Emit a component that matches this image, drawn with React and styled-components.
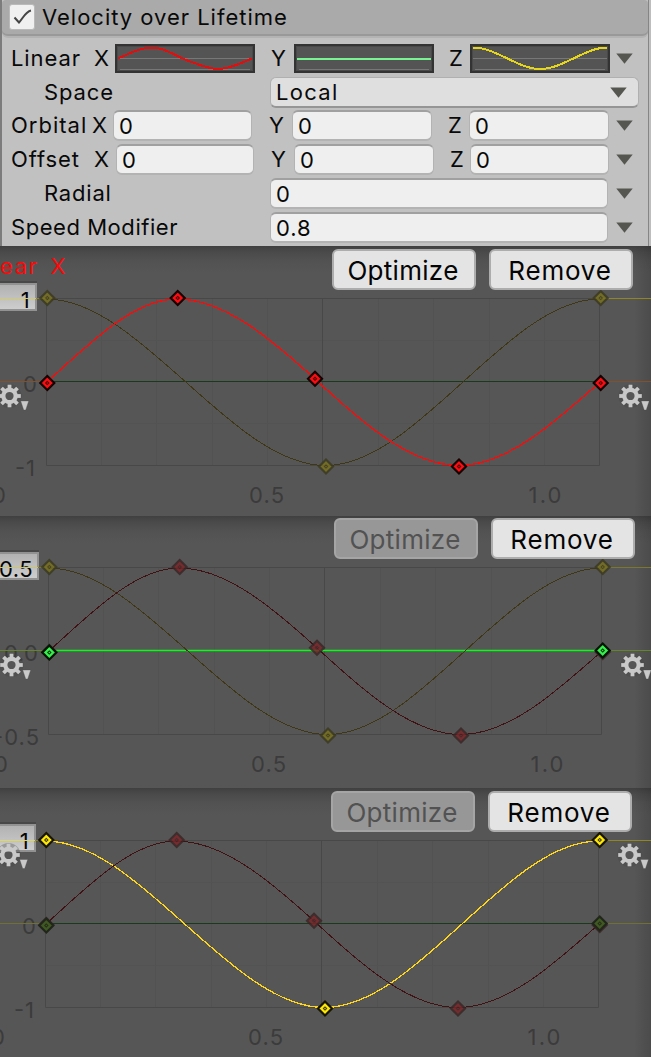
import React from 'react';
import styled, { createGlobalStyle } from 'styled-components';

const GlobalStyle = createGlobalStyle`
    body {
        margin: 0;
        background: #565656;
        font-family: Inter, "Liberation Sans", sans-serif;
    }
`
const Page = styled.div`
    width: 651px;
    height: 1057px;
    overflow: hidden;
`

/* ---- module panel ---- */
const Module = styled.div`
    box-sizing: border-box;
    height: 246px;
    background: #c1c1c1;
    border-left: 2px solid #7c7c7c;
    border-right: 2px solid #bdbdbd;
    box-shadow: inset -1px 0 0 #858585;
`
const Header = styled.div`
    box-sizing: border-box;
    display: flex;
    align-items: center;
    height: 38px;
    margin-right: 1px;
    padding: 0 0 3px 7px;
    background: #aaaaaa;
    border-bottom: 2px solid #b3b3b3;
    border-radius: 4px 4px 6px 6px;
    box-shadow: inset 0 -2px 0 #999999;
`
const Checkbox = styled.div`
    box-sizing: border-box;
    display: flex;
    align-items: center;
    justify-content: center;
    width: 26px;
    height: 26px;
    background: #f0f0f0;
    border: 1px solid #b9b9b9;
    border-radius: 3px;
`
const Title = styled.div`
    margin-left: 7px;
    font-size: 22px;
    line-height: 30px;
    letter-spacing: 0.98px;
    color: #090909;
    white-space: pre;
`
const Rows = styled.div`
    padding: 3px 0 0 9px;
`
const Row = styled.div`
    display: grid;
    grid-template-columns: ${props => props.$columns};
    align-items: center;
    height: ${props => props.$height || 34}px;
`
const Label = styled.div`
    padding-left: ${props => props.$indent || 0}px;
    font-size: 22px;
    line-height: 30px;
    letter-spacing: ${props => props.$spacing || 0.9}px;
    color: #090909;
    white-space: pre;
`
const Field = styled.div`
    box-sizing: border-box;
    height: 31px;
    padding-left: 5px;
    background: #efefef;
    border: 1px solid #b3b3b3;
    border-top: 2px solid #a0a0a0;
    border-bottom-width: 2px;
    border-radius: 6px;
    font-size: 22px;
    line-height: 29px;
    letter-spacing: 0.9px;
    color: #090909;
`
const Dropdown = styled.div`
    box-sizing: border-box;
    display: flex;
    align-items: center;
    justify-content: space-between;
    height: 31px;
    margin-top: 2px;
    padding: 0 11px 0 5px;
    background: #dfdfdf;
    border: 1px solid #b0b0b0;
    border-bottom: 2px solid #959595;
    border-radius: 6px;
    font-size: 22px;
    letter-spacing: 1.3px;
    color: #090909;
`
const CurveBox = styled.div`
    box-sizing: border-box;
    height: 29px;
    background: #545454;
    border: 2px solid #333333;
    box-shadow: inset 0 0 0 1px #494949;

    svg {
        display: block;
    }
`
const ArrowCell = styled.div`
    display: flex;
    justify-content: flex-end;
`

/* ---- curve editors ---- */
const Graph = styled.div`
    display: grid;
    height: ${props => props.$height}px;
    overflow: hidden;
    background:
        linear-gradient(to left, rgba(0, 0, 0, 0.13), rgba(0, 0, 0, 0) 17px),
        linear-gradient(#404040, #4a4a4a 6px, #525252 15px, #565656 27px);

    > * {
        grid-area: 1 / 1;
    }
`
const Canvas = styled.svg`
    display: block;
    font-size: 22px;
`
const ValueField = styled.div`
    box-sizing: border-box;
    width: ${props => props.$width}px;
    height: 28px;
    margin-top: ${props => props.$top}px;
    padding-right: ${props => props.$pad}px;
    overflow: hidden;
    background: linear-gradient(#b2b2b2, #cdcdcd);
    border: solid #929292;
    border-width: 2px 2px 2px 0;
    box-shadow: 0 -2px 0 #484848;
    display: flex;
    justify-content: flex-end;
    font-size: 22px;
    line-height: 31px;
    letter-spacing: 0.4px;
    color: #050505;
`
const Toolbar = styled.div`
    display: flex;
    justify-content: flex-end;
    align-items: flex-start;
    gap: 13px;
    padding: ${props => props.$top}px ${props => props.$right}px 0 0;
`
const Button = styled.button`
    box-sizing: border-box;
    width: 144px;
    height: 41px;
    padding: 2px 2px 0 0;
    background: ${props => (props.disabled ? '#979797' : '#e4e4e4')};
    border: 2px solid ${props => (props.disabled ? '#a5a5a5' : '#adadad')};
    border-radius: 6px;
    font-family: inherit;
    font-size: 26px;
    line-height: 35px;
    letter-spacing: ${props => props.$spacing || 0.3}px;
    color: ${props => (props.disabled ? '#525252' : '#050505')};
`

const Arrow = () => (
    <svg width="17" height="11" viewBox="0 0 17 11">
        <path d="M0.3 0.5H16.7L8.5 10.7Z" fill="#565650" />
    </svg>
)

const MiniCurve = ({ d, color }) => (
    <CurveBox>
        <svg width="136" height="25" viewBox="0 0 136 25" fill="none">
            <path d="M1 12.5H135M3 23.5H133" stroke="#777777" />
            <path d={d} stroke={color} strokeWidth="2" shapeRendering="crispEdges" />
        </svg>
    </CurveBox>
)

const Gear = ({ x, y, tailX, tailY }) => (
    <g style={{ filter: 'blur(0.5px)' }}>
        <g transform={`translate(${x} ${y})`} stroke="#c9c9c9" fill="none">
            <circle r="9" stroke="#444444" strokeWidth="6" opacity="0.35" />
            <circle r="6.2" strokeWidth="4.2" />
            {[0, 45, 90, 135, 180, 225, 270, 315].map(a => (
                <path key={a} d="M0 -7V-11.3" strokeWidth="3.8" transform={`rotate(${a})`} />
            ))}
        </g>
        <path
            d="M-4 -4H4L1 5H-1Z"
            transform={`translate(${tailX} ${tailY})`}
            fill="#c9c9c9"
            stroke="#444444"
            strokeOpacity="0.3"
        />
    </g>
)

const keyColors = {
    red: ['#fb0d12', '#160000', 1],
    green: ['#35ef4c', '#061406', 1],
    yellow: ['#fbe50a', '#171500', 1],
    dimRed: ['#7a2529', '#3a2626', 0.85],
    dimGreen: ['#3e5c22', '#20261a', 0.95],
    dimYellow: ['#78701f', '#3c3a20', 0.85],
}

const Key = ({ x, y, kind }) => {
    const [fill, edge, opacity] = keyColors[kind]
    return (
        <g transform={`translate(${x} ${y})`} opacity={opacity}>
            <path d="M0 -7L7 0L0 7L-7 0Z" fill={fill} stroke={edge} strokeWidth="2.2" />
            <path d="M0 -2.3L2.3 0L0 2.3L-2.3 0Z" fill={edge} opacity="0.85" />
            <circle r="0.7" fill={fill} />
        </g>
    )
}

// Every curve lives in a 553 x 167 plot area whose origin is its top left corner
const waveX = 'M0 84C43.5 44.5 87 0.5 130.5 0.5C176.5 0.5 222.5 38.5 268.5 80.5C316.5 125 364.5 167 412.5 167C459.5 167 506.5 125.5 553 84'
const waveZ = 'M0 0.5C93 0.5 186 167 279 167C370.5 167 462 0.5 553 0.5'
const keysX = [[0.8, 84.5], [131.2, -0.5], [268.5, 80.3], [412.5, 168], [554.2, 84.5]]
const keysY = [[0.8, 85], [554.2, 83]]
const keysZ = [[0.8, -0.5], [279.5, 168], [554.2, -0.5]]
const columns = [55, 110, 166, 221, 332, 387, 443, 498]

const Keys = ({ points, kind }) => points.map(([x, y]) => <Key key={x} x={x} y={y} kind={kind} />)

const Plot = ({ x, y, active, halfRows, outerTop, outerZero }) => (
    <g transform={`translate(${x} ${y})`} fill="none">
        <path d={columns.map(c => `M${c} 0V167`).join('')} stroke="#525252" />
        {halfRows && <path d="M0 42H553M0 125H553" stroke="#535353" />}
        <path d="M0 0H553V167H0ZM276 0V167" stroke="#484848" />
        <path d={`M${-x} 0H0M553 0H651`} stroke={outerTop} />
        <path d={`M${-x} 83H0M553 83H651`} stroke={outerZero} />
        <path d="M0 83H553" stroke={active === 'y' ? '#06fb15' : '#1a3a1d'} strokeWidth={active === 'y' ? 1.4 : 1} />
        <path d={waveZ} stroke={active === 'z' ? '#ffd51a' : '#403815'} strokeWidth={active === 'z' ? 1.3 : 1} shapeRendering="crispEdges" />
        <path d={waveX} stroke={active === 'x' ? '#ff0808' : '#421114'} strokeWidth={active === 'x' ? 1.3 : 1} shapeRendering="crispEdges" />
    </g>
)

const AxisText = ({ x, y, width, children }) => (
    <text x={x} y={y} fill="#3b3b3b" textLength={width} lengthAdjust="spacing">{children}</text>
)

const VelocityModule = () => (
    <Module>
        <Header>
            <Checkbox>
                <svg width="21" height="21" viewBox="0 0 21 21" fill="none">
                    <path d="M2.5 11.5L7 16.5C10.5 13 13.5 5.5 19 4.5" stroke="#454545" strokeWidth="2" />
                </svg>
            </Checkbox>
            <Title>Velocity over Lifetime</Title>
        </Header>
        <Rows>
            <Row $columns="83px 21px 140px 39px 140px 36px 140px 23px">
                <Label>Linear</Label>
                <Label>X</Label>
                <MiniCurve color="#e60c0c" d="M1 12.5C12 8 22 1.5 34 1.5C47 1.5 56 8.5 68 13.5C80 18 91 23 101 23C113 23 124 17 135 12.5" />
                <Label $indent={16}>Y</Label>
                <MiniCurve color="#77f391" d="M1 12.5H135" />
                <Label $indent={15}>Z</Label>
                <MiniCurve color="#e5d51b" d="M1 1.5C24 1.5 46 23 68 23C91 23 113 1.5 135 1.5" />
                <ArrowCell><Arrow /></ArrowCell>
            </Row>
            <Row $columns="259px 369px" $height={33}>
                <Label $indent={33}>Space</Label>
                <Dropdown>Local<Arrow /></Dropdown>
            </Row>
            <Row $columns="81px 21px 139px 40px 140px 37px 140px 24px">
                <Label $spacing={1}>Orbital</Label>
                <Label>X</Label>
                <Field>0</Field>
                <Label $indent={17}>Y</Label>
                <Field>0</Field>
                <Label $indent={16}>Z</Label>
                <Field>0</Field>
                <ArrowCell><Arrow /></ArrowCell>
            </Row>
            <Row $columns="83px 22px 138px 40px 140px 36px 139px 24px">
                <Label>Offset</Label>
                <Label>X</Label>
                <Field>0</Field>
                <Label $indent={17}>Y</Label>
                <Field>0</Field>
                <Label $indent={16}>Z</Label>
                <Field>0</Field>
                <ArrowCell><Arrow /></ArrowCell>
            </Row>
            <Row $columns="259px 338px 25px">
                <Label $indent={33} $spacing={0.8}>Radial</Label>
                <Field>0</Field>
                <ArrowCell><Arrow /></ArrowCell>
            </Row>
            <Row $columns="259px 338px 25px">
                <Label $spacing={0.55}>Speed Modifier</Label>
                <Field>0.8</Field>
                <ArrowCell><Arrow /></ArrowCell>
            </Row>
        </Rows>
    </Module>
)

const GraphX = () => (
    <Graph $height={270}>
        <ValueField $width={37} $top={37} $pad={5}>1</ValueField>
        <Canvas width="651" height="270" viewBox="0 0 651 270">
            <text y="28" fill="#ff0808"><tspan x="0" textLength="37">ear</tspan><tspan x="50.5">X</tspan></text>
            <AxisText x={23} y={146}>0</AxisText>
            <AxisText x={15} y={229.5} width={20}>-1</AxisText>
            <AxisText x={-8} y={256.5}>0</AxisText>
            <AxisText x={249} y={256.5} width={35}>0.5</AxisText>
            <AxisText x={528.5} y={256.5} width={33}>1.0</AxisText>
            <Plot x={46.5} y={52.5} active="x" halfRows outerTop="#918522" outerZero="#82512c" />
            <path d="M0 52.5H36" stroke="#d2cb6b" />
            <g transform="translate(46.5 52.5)">
                <Keys points={keysZ} kind="dimYellow" />
                <Keys points={keysX} kind="red" />
            </g>
            <Gear x={9.5} y={150} tailX={24.7} tailY={159} />
            <Gear x={630.5} y={150} tailX={645.2} tailY={159} />
        </Canvas>
        <Toolbar $top={3} $right={18}>
            <Button>Optimize</Button>
            <Button $spacing={0.8}>Remove</Button>
        </Toolbar>
    </Graph>
)

const GraphY = () => (
    <Graph $height={272}>
        <ValueField $width={39} $top={36} $pad={4}>0.5</ValueField>
        <Canvas width="651" height="272" viewBox="0 0 651 272">
            <AxisText x={4} y={145} width={34}>0.0</AxisText>
            <AxisText x={-7} y={228.5} width={46}>-0.5</AxisText>
            <AxisText x={-6} y={255.5}>0</AxisText>
            <AxisText x={251} y={255.5} width={35}>0.5</AxisText>
            <AxisText x={530.5} y={255.5} width={33}>1.0</AxisText>
            <Plot x={48.5} y={51.5} active="y" outerTop="#7d762d" outerZero="#64852a" />
            <path d="M0 51.5H38" stroke="#cbc66c" />
            <g transform="translate(48.5 51.5)">
                <Keys points={keysZ} kind="dimYellow" />
                <Keys points={keysX} kind="dimRed" />
                <Keys points={keysY} kind="green" />
            </g>
            <Gear x={11.5} y={149} tailX={26.7} tailY={158} />
            <Gear x={632.5} y={149} tailX={647.2} tailY={158} />
        </Canvas>
        <Toolbar $top={2} $right={16}>
            <Button disabled>Optimize</Button>
            <Button $spacing={0.8}>Remove</Button>
        </Toolbar>
    </Graph>
)

const GraphZ = () => (
    <Graph $height={269}>
        <ValueField $width={36} $top={36} $pad={5}>1</ValueField>
        <Canvas width="651" height="269" viewBox="0 0 651 269">
            <AxisText x={22} y={146}>0</AxisText>
            <AxisText x={14} y={229.5} width={20}>-1</AxisText>
            <AxisText x={-9} y={256.5}>0</AxisText>
            <AxisText x={248} y={256.5} width={35}>0.5</AxisText>
            <AxisText x={527.5} y={256.5} width={33}>1.0</AxisText>
            <Plot x={45.5} y={52.5} active="z" halfRows outerTop="#92861f" outerZero="#716f32" />
            <path d="M0 52.5H35" stroke="#e0d85b" />
            <g transform="translate(45.5 52.5)">
                <Keys points={keysX} kind="dimRed" />
                <Keys points={keysY} kind="dimGreen" />
                <Keys points={keysZ} kind="yellow" />
            </g>
            <Gear x={8.5} y={67} tailX={23.7} tailY={75.5} />
            <Gear x={629.5} y={67} tailX={644.5} tailY={75.5} />
        </Canvas>
        <Toolbar $top={3} $right={19}>
            <Button disabled>Optimize</Button>
            <Button $spacing={0.8}>Remove</Button>
        </Toolbar>
    </Graph>
)

const App = () => (
    <Page>
        <GlobalStyle />
        <VelocityModule />
        <GraphX />
        <GraphY />
        <GraphZ />
    </Page>
)

export default App;
